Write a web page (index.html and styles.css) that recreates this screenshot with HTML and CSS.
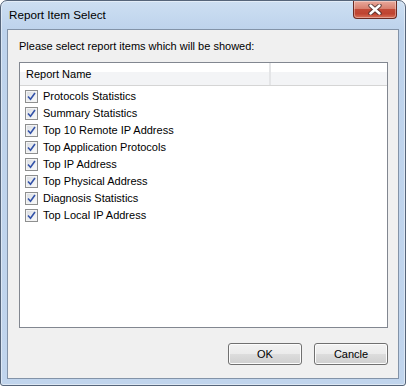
FILE: index.html
```html
<!DOCTYPE html>
<html>
<head>
<meta charset="utf-8">
<link rel="stylesheet" href="styles.css">
</head>
<body>
<div class="window">
  <div class="titlebar">
    <span class="title">Report Item Select</span>
    <div class="close">
      <svg width="14" height="11" viewBox="0 0 14 11">
        <path d="M2.5 1.5 L11.5 9.5 M11.5 1.5 L2.5 9.5" stroke="#3b2a2a" stroke-width="4.4" stroke-linecap="round" fill="none" opacity="0.75"/>
        <path d="M2.5 1.5 L11.5 9.5 M11.5 1.5 L2.5 9.5" stroke="#ffffff" stroke-width="2.4" stroke-linecap="round" fill="none"/>
      </svg>
    </div>
  </div>
  <div class="client">
    <div class="prompt">Please select report items which will be showed:</div>
    <div class="list">
      <div class="list-header">
        <div class="col col-name">Report Name</div>
        <div class="col col-rest"></div>
      </div>
      <ul class="rows">
        <li class="row"><span class="check"><svg width="9" height="9" viewBox="0 0 9 9"><path d="M1 4.5 L3.5 7.2 L8 1" stroke="#3352a8" stroke-width="1.6" fill="none"/></svg></span><span class="label">Protocols Statistics</span></li>
        <li class="row"><span class="check"><svg width="9" height="9" viewBox="0 0 9 9"><path d="M1 4.5 L3.5 7.2 L8 1" stroke="#3352a8" stroke-width="1.6" fill="none"/></svg></span><span class="label">Summary Statistics</span></li>
        <li class="row"><span class="check"><svg width="9" height="9" viewBox="0 0 9 9"><path d="M1 4.5 L3.5 7.2 L8 1" stroke="#3352a8" stroke-width="1.6" fill="none"/></svg></span><span class="label">Top 10 Remote IP Address</span></li>
        <li class="row"><span class="check"><svg width="9" height="9" viewBox="0 0 9 9"><path d="M1 4.5 L3.5 7.2 L8 1" stroke="#3352a8" stroke-width="1.6" fill="none"/></svg></span><span class="label">Top Application Protocols</span></li>
        <li class="row"><span class="check"><svg width="9" height="9" viewBox="0 0 9 9"><path d="M1 4.5 L3.5 7.2 L8 1" stroke="#3352a8" stroke-width="1.6" fill="none"/></svg></span><span class="label">Top IP Address</span></li>
        <li class="row"><span class="check"><svg width="9" height="9" viewBox="0 0 9 9"><path d="M1 4.5 L3.5 7.2 L8 1" stroke="#3352a8" stroke-width="1.6" fill="none"/></svg></span><span class="label">Top Physical Address</span></li>
        <li class="row"><span class="check"><svg width="9" height="9" viewBox="0 0 9 9"><path d="M1 4.5 L3.5 7.2 L8 1" stroke="#3352a8" stroke-width="1.6" fill="none"/></svg></span><span class="label">Diagnosis Statistics</span></li>
        <li class="row"><span class="check"><svg width="9" height="9" viewBox="0 0 9 9"><path d="M1 4.5 L3.5 7.2 L8 1" stroke="#3352a8" stroke-width="1.6" fill="none"/></svg></span><span class="label">Top Local IP Address</span></li>
      </ul>
    </div>
    <div class="buttons">
      <button class="btn">OK</button>
      <button class="btn">Cancle</button>
    </div>
  </div>
</div>
</body>
</html>
```

FILE: styles.css
```css
* { box-sizing: border-box; }
html, body {
  margin: 0;
  padding: 0;
  background: #ffffff;
}
body {
  font-family: "Liberation Sans", Arial, sans-serif;
  font-size: 11px;
  color: #000;
}
.window {
  width: 406px;
  height: 386px;
  border: 1px solid #56657a;
  border-radius: 7px 7px 3px 3px;
  background: linear-gradient(180deg, #cddff2 0px, #bed3ec 28px, #c1d5ed 100%);
  box-shadow: inset 0 0 0 1px rgba(255,255,255,0.45);
  display: flex;
  flex-direction: column;
}
.titlebar {
  height: 28px;
  display: flex;
  justify-content: space-between;
  align-items: flex-start;
  padding-left: 8px;
  padding-right: 8px;
}
.title {
  line-height: 28px;
  font-size: 11.7px;
  color: #000;
}
.close {
  width: 44px;
  height: 18px;
  border: 1px solid #6b2a22;
  border-top: none;
  border-radius: 0 0 4px 4px;
  background: linear-gradient(180deg, #e9a99c 0%, #d8806f 45%, #c24a37 50%, #bf4330 75%, #d9725a 100%);
  box-shadow: inset 0 0 0 1px rgba(255,255,255,0.35);
  display: flex;
  align-items: center;
  justify-content: center;
}
.close svg { display: block; margin-top: -1px; }
.client {
  flex: 1;
  margin: 0 6px 6px 6px;
  border: 1px solid #8393a8;
  background: #f0f0f0;
  padding: 9px 10px 13px 11px;
  display: flex;
  flex-direction: column;
}
.prompt {
  height: 15px;
  line-height: 15px;
  margin-bottom: 8px;
}
.list {
  flex: 1;
  border: 1px solid #828790;
  background: #ffffff;
  display: flex;
  flex-direction: column;
}
.list-header {
  height: 23px;
  display: flex;
  border-bottom: 1px solid #d5d5d5;
  background: linear-gradient(180deg, #ffffff 0%, #ffffff 40%, #f3f4f6 41%, #f3f4f6 100%);
}
.col {
  line-height: 22px;
}
.col-name {
  width: 251px;
  padding-left: 6px;
  border-right: 2px solid #e4e5e7;
}
.col-rest { flex: 1; }
.rows {
  list-style: none;
  margin: 0;
  padding: 2px 0 0 0;
}
.row {
  height: 17px;
  display: flex;
  align-items: center;
  padding-left: 5px;
}
.check {
  width: 13px;
  height: 13px;
  border: 1px solid #8e8f8f;
  background: linear-gradient(135deg, #d7dadf 0%, #eef0f2 60%, #fafafa 100%);
  box-shadow: inset 0 0 0 1px #f4f4f4;
  display: flex;
  align-items: center;
  justify-content: center;
  margin-right: 5px;
}
.check svg { display: block; }
.label { line-height: 17px; }
.buttons {
  margin-top: 15px;
  display: flex;
  justify-content: flex-end;
  gap: 12px;
}
.btn {
  width: 74px;
  height: 22px;
  padding: 0;
  font-family: "Liberation Sans", Arial, sans-serif;
  font-size: 11px;
  color: #000;
  border: 1px solid #707070;
  border-radius: 3px;
  background: linear-gradient(180deg, #f2f2f2 0%, #ebebeb 50%, #dddddd 51%, #cfcfcf 100%);
  box-shadow: inset 0 0 0 1px #fcfcfc;
}
```
